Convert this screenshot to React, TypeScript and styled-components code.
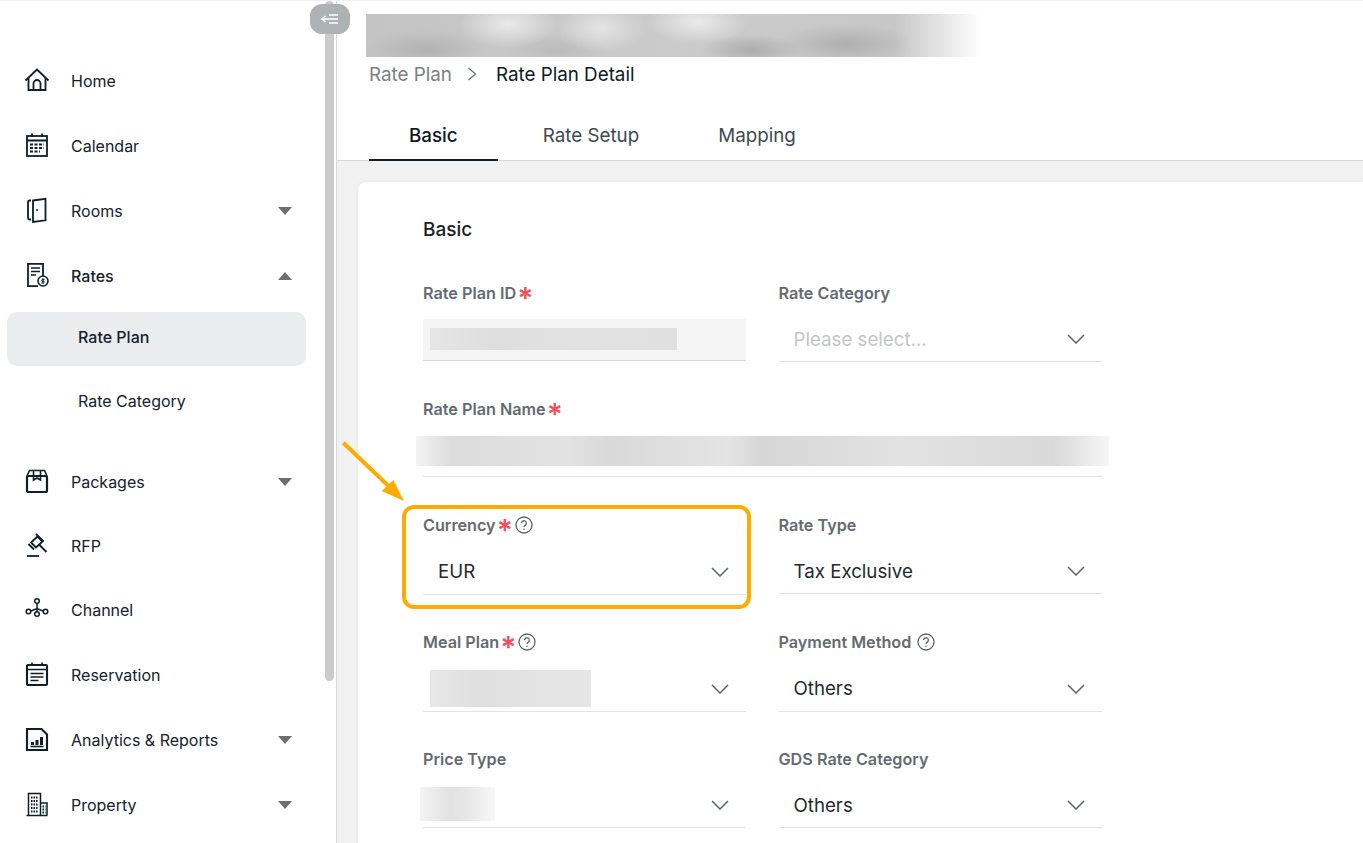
import React from "react";
import styled, { createGlobalStyle } from "styled-components";

const Global = createGlobalStyle`
  html, body { margin: 0; padding: 0; height: 100%; overflow: hidden; background: #fff; }
  * { box-sizing: border-box; }
  body { font-family: Inter, "Liberation Sans", sans-serif; }
`;
const Page = styled.div`display: flex; height: 843px; width: 1363px; overflow: hidden; border-top: 1px solid #f2f2f2;`;
const Sidebar = styled.aside`position: relative; flex: 0 0 337px; border-right: 1px solid #d6d9db; background: #fff; padding: 47px 30px 0 7px;`;
const Scroll = styled.div`position: absolute; left: 325px; top: 0; width: 9px; height: 680px; background: #cbcbcb; border-radius: 5px;`;
const Toggle = styled.button`position: absolute; left: 310px; top: 3px; width: 40px; height: 30px; border: 0; border-radius: 12px; background: #adb2b5; display: flex; align-items: center; justify-content: center; padding: 0; z-index: 3;`;
const Item = styled.div<{ $h?: number }>`display: flex; align-items: center; height: ${p => p.$h ?? 65}px; padding-left: 17px; color: #14222d; font-size: 16px;`;
const IconBox = styled.span`width: 47px; display: flex; flex: none; color: #0d1f2b; margin-top: -2px;`;
const ItemLabel = styled.span<{ $strong?: boolean }>`flex: 1; font-weight: ${p => p.$strong ? 500 : 400};`;
const Caret = styled.span<{ $up?: boolean }>`width: 0; height: 0; margin-right: 14px; border-left: 7px solid transparent; border-right: 7px solid transparent; ${p => p.$up ? "border-bottom: 8px solid #677077;" : "border-top: 8px solid #677077;"}`;
const Sub = styled.div<{ $active?: boolean }>`display: flex; align-items: center; height: 54px; width: 299px; padding: 0 0 4px 71px; border-radius: 10px; font-size: 16px; color: #14222d; font-weight: ${p => p.$active ? 500 : 400}; background: ${p => p.$active ? "#ebeced" : "transparent"};`;
const SubGroup = styled.div`display: flex; flex-direction: column; gap: 10px; margin: 4px 0 20px;`;

const Main = styled.main`flex: 1; min-width: 0; background: #f2f2f2; display: flex; flex-direction: column;`;
const Head = styled.header`background: #fff; height: 160px; border-bottom: 1px solid #d6d9db; padding: 13px 0 0 29px; flex: none;`;
const TitleBlur = styled.div`
  width: 615px; height: 43px;
  background:
    linear-gradient(90deg, rgba(255,255,255,0) 86%, #fff 100%),
    radial-gradient(ellipse 50px 24px at 142px 10px, rgba(240,240,240,.85), rgba(240,240,240,0)),
    radial-gradient(ellipse 45px 24px at 235px 14px, rgba(235,235,235,.8), rgba(235,235,235,0)),
    radial-gradient(ellipse 50px 22px at 332px 8px, rgba(240,240,240,.85), rgba(240,240,240,0)),
    radial-gradient(ellipse 60px 20px at 60px 36px, rgba(165,165,165,.6), rgba(165,165,165,0)),
    radial-gradient(ellipse 50px 18px at 190px 36px, rgba(175,175,175,.5), rgba(175,175,175,0)),
    radial-gradient(ellipse 50px 16px at 385px 36px, rgba(160,160,160,.7), rgba(160,160,160,0)),
    radial-gradient(ellipse 70px 20px at 480px 30px, rgba(165,165,165,.7), rgba(165,165,165,0)),
    linear-gradient(90deg, #c4c4c4, #cbcbcb 50%, #c6c6c6);
`;
const Crumbs = styled.div`display: flex; align-items: center; height: 34px; padding-left: 3px; font-size: 18.8px; color: #7a8085;`;
const CrumbCurrent = styled.span`color: #0d1a24; margin-left: 19px;`;
const CrumbSep = styled.svg`margin-left: 15px; color: #6c7378;`;
const Tabs = styled.div`display: flex; margin-top: 25px; padding-left: 3px;`;
const Tab = styled.div<{ $active?: boolean }>`
  height: 45px; padding: 0 40px; font-size: 18.8px; line-height: 40px; margin-right: ${p => p.$active ? "5px" : "-1px"};
  color: ${p => p.$active ? "#0d1a24" : "#3f4a52"}; font-weight: ${p => p.$active ? 500 : 400};
  border-bottom: ${p => p.$active ? "2px solid #0d1f2b" : "0"};
`;
const Body = styled.div`flex: 1; padding: 21px 0 0 21px; overflow: hidden;`;
const Card = styled.section`background: #fff; border-radius: 8px 0 0 0; height: 800px; padding: 37px 0 0 65px; box-shadow: 0 0 4px rgba(0,0,0,.05);`;
const CardTitle = styled.h2`margin: 0 0 42px; font-size: 19px; line-height: 22px; font-weight: 500; color: #1a1f24;`;
const Grid = styled.div`display: grid; grid-template-columns: 323px 323px; column-gap: 32.5px; width: 678.500px;`;
const Field = styled.div<{ $wide?: boolean; $h: number }>`position: relative; grid-column: ${p => p.$wide ? "1 / span 2" : "auto"}; height: ${p => p.$h}px;`;
const Label = styled.div`display: flex; align-items: center; height: 20px; font-size: 16.2px; font-weight: 600; color: #646b70;`;
const Star = styled.span`color: #f2505d; font-size: 30px; margin-left: 1px; margin-right: -4px; line-height: 20px; height: 20px; padding-top: 5px; font-weight: 600;`;
const Help = styled.svg`margin-left: 6px; color: #5d6469;`;
const Control = styled.div<{ $filled?: boolean; $h?: number }>`
  display: flex; align-items: center; justify-content: space-between; height: ${p => p.$h ?? 43}px; margin-top: 16px;
  border-bottom: 1px solid ${p => p.$filled ? "#d8d8d8" : "#e1e3e4"}; padding: 0 17px 2px 15px; font-size: 18.7px; color: #222a30;
  background: ${p => p.$filled ? "#f5f5f5" : "transparent"};
`;
const Placeholder = styled.span`color: #c3c6c8;`;
const BlurBar = styled.div<{ $w: number; $h: number; $ml: number; $mb?: number; $tone: string }>`
  width: ${p => p.$w}px; height: ${p => p.$h}px; margin-left: ${p => p.$ml}px; margin-bottom: ${p => p.$mb ?? 0}px; flex: none;
  background: ${p => p.$tone};
`;
const Highlight = styled.div`position: absolute; left: -21px; top: -10px; width: 349px; height: 104px; border: 4px solid #ffab00; border-radius: 12px; pointer-events: none;`;
const Arrow = styled.svg`position: absolute; left: -82px; top: -85px; pointer-events: none;`;

const S = { width: 26, height: 26, viewBox: "0 0 26 26", fill: "none", stroke: "currentColor", strokeWidth: 1.8 } as const;
const Icons: Record<string, React.ReactNode> = {
  home: <svg {...S}><path d="M1.500 13.500 13 2.500l11.500 11" /><path d="M4.500 11v12h17V11" /><path d="M9.500 23v-6.500a3.500 3.500 0 0 1 7 0V23" /></svg>,
  cal: <svg {...S}><rect x="3" y="4" width="20" height="20" /><path d="M3 8.500h20M8 1.500V5M18 1.500V5" /><path d="M6 12.500h14M6 16h14M6 19.500h10" strokeDasharray="3 1.500" strokeWidth="2" /></svg>,
  door: <svg {...S}><path d="M7 3.500H5.500a1.500 1.500 0 0 0-1.500 1.500v16a1.500 1.500 0 0 0 1.500 1.500H7" /><path d="M9 3.500 21.500 1.800v21.500L9 25z" /><circle cx="13" cy="13" r="1" fill="currentColor" stroke="none" /></svg>,
  rates: <svg {...S}><path d="M19 14V1.800H4v22.400h10" /><path d="M7 6h9M7 9.500h9M7 13h5" strokeWidth="1.600" /><circle cx="19" cy="19" r="5" strokeWidth="1.600" /><path d="M19 16.200v5.600M20.600 17.300h-2.300a1 1 0 0 0 0 1.800h1.400a1 1 0 0 1 0 1.800h-2.300" strokeWidth="1" /></svg>,
  pack: <svg {...S}><rect x="3" y="8" width="20" height="16" rx="1.500" strokeWidth="2.200" /><path d="M3 8 5.500 2.500h15L23 8M9.500 2.500V12l3.500-2 3.500 2V2.500" strokeWidth="1.600" /></svg>,
  rfp: <svg {...S}><path d="M13.500 4.500 7 10.500l5 5 6.500-6z" /><path d="M4.500 12 10 17.500M12 2l7.500 7.500M15 12.500l7.500 7.500" /><path d="M3 24h12" /></svg>,
  chan: <svg {...S} strokeWidth={1.500}><circle cx="13" cy="5" r="2.300" /><circle cx="4.500" cy="15.500" r="2.300" /><circle cx="13" cy="18" r="2.300" /><circle cx="21.500" cy="15.500" r="2.300" /><path d="M13 7.500v8M7 15l6-2.500 6 2.500" /></svg>,
  res: <svg {...S}><rect x="3" y="4" width="20" height="20" rx="1" strokeWidth="2.100" /><path d="M3 8.500h20M8 1.500V5M18 1.500V5M6.500 12.500h13M6.500 16h13M6.500 19.500h8" strokeWidth="1.700" /></svg>,
  ana: <svg {...S}><path d="M3 3h14.500L23 8.500V24H3z" strokeWidth="2.100" /><path d="M6.500 20.500h13" strokeWidth="1.600" /><path d="M8.500 19v-3M13 19v-5M17.500 19v-8" strokeWidth="3" /></svg>,
  prop: <svg {...S} strokeWidth={1.500}><path d="M4.500 24V2.500h12V24M16.500 12h6.500v12M2.500 24.500h21" /><path d="M7 6.500h7M7 10h7M7 13.500h7M7 17h7M7 20.500h7M18.500 15.500h3M18.500 18.500h3M18.500 21.500h3" strokeDasharray="1.500 1" strokeWidth="2" /></svg>,
};

const Nav = ({ icon, label, caret, strong, h }: { icon: string; label: string; caret?: "up" | "down"; strong?: boolean; h?: number }) => (
  <Item $h={h}>
    <IconBox>{Icons[icon]}</IconBox>
    <ItemLabel $strong={strong}>{label}</ItemLabel>
    {caret && <Caret $up={caret === "up"} />}
  </Item>
);

const Chevron = () => (
  <svg width="18" height="10" viewBox="0 0 18 10" fill="none" stroke="#59636a" strokeWidth="1.500"><path d="M1 1l8 8 8-8" /></svg>
);
const HelpIcon = () => (
  <Help width="18" height="18" viewBox="0 0 18 18" fill="none" stroke="currentColor" strokeWidth="1.300">
    <circle cx="9" cy="9" r="8" />
    <path d="M6.600 7.100a2.400 2.400 0 1 1 3.800 2c-.9.500-1.400 1-1.400 2" />
    <circle cx="9" cy="13.300" r=".8" fill="currentColor" stroke="none" />
  </Help>
);

export default function App() {
  return (
    <>
      <Global />
      <Page>
        <Sidebar>
          <Scroll />
          <Toggle aria-label="collapse">
            <svg width="18" height="10" viewBox="0 0 18 10" fill="none" stroke="#fff" strokeWidth="1.500">
              <path d="M1 5h16M4.500 2 1 5l3.500 3M8 1h9M8 9h9" />
            </svg>
          </Toggle>
          <Nav icon="home" label="Home" />
          <Nav icon="cal" label="Calendar" />
          <Nav icon="door" label="Rooms" caret="down" />
          <Nav icon="rates" label="Rates" caret="up" strong />
          <SubGroup>
            <Sub $active>Rate Plan</Sub>
            <Sub>Rate Category</Sub>
          </SubGroup>
          <Nav icon="pack" label="Packages" caret="down" h={64} />
          <Nav icon="rfp" label="RFP" h={64} />
          <Nav icon="chan" label="Channel" h={64} />
          <Nav icon="res" label="Reservation" />
          <Nav icon="ana" label="Analytics &amp; Reports" caret="down" />
          <Nav icon="prop" label="Property" caret="down" />
        </Sidebar>
        <Main>
          <Head>
            <TitleBlur />
            <Crumbs>
              Rate Plan
              <CrumbSep width="10" height="14" viewBox="0 0 10 14" fill="none" stroke="currentColor" strokeWidth="1.300"><path d="M1.500 1l7 6-7 6" /></CrumbSep>
              <CrumbCurrent>Rate Plan Detail</CrumbCurrent>
            </Crumbs>
            <Tabs>
              <Tab $active>Basic</Tab>
              <Tab>Rate Setup</Tab>
              <Tab>Mapping</Tab>
            </Tabs>
          </Head>
          <Body>
            <Card>
              <CardTitle>Basic</CardTitle>
              <Grid>
                <Field $h={116}>
                  <Label>Rate Plan ID<Star>*</Star></Label>
                  <Control $filled $h={42}><BlurBar $w={247} $h={22} $ml={-8} $tone="linear-gradient(90deg,#e6e6e6,#dedede 25%,#e2e2e2 60%,#e0e0e0)" /></Control>
                </Field>
                <Field $h={116}>
                  <Label>Rate Category</Label>
                  <Control $h={43}><Placeholder>Please select...</Placeholder><Chevron /></Control>
                </Field>
                <Field $wide $h={116}>
                  <Label>Rate Plan Name<Star>*</Star></Label>
                  <Control $h={42}><BlurBar $w={693} $h={30} $ml={-22} $mb={7} $tone="linear-gradient(90deg,#f4f4f4,#dcdcdc 5%,#e2e2e2 22%,#d9d9d9 28%,#e4e4e4 45%,#d6d6d6 50%,#e2e2e2 70%,#d9d9d9 92%,#f6f6f6)" /></Control>
                </Field>
                <Field $h={117}>
                  <Label>Currency<Star>*</Star><HelpIcon /></Label>
                  <Control $h={44}>EUR<Chevron /></Control>
                  <Highlight />
                  <Arrow width="66" height="74" viewBox="0 0 66 74" fill="none" stroke="#ffab00" strokeWidth="4">
                    <path d="M2.300 12.700 58 66" />
                    <path d="M40.700 61 63 71 52.300 50z" fill="#ffab00" stroke="none" />
                  </Arrow>
                </Field>
                <Field $h={117}>
                  <Label>Rate Type</Label>
                  <Control $h={43}>Tax Exclusive<Chevron /></Control>
                </Field>
                <Field $h={117}>
                  <Label>Meal Plan<Star>*</Star><HelpIcon /></Label>
                  <Control $h={44}><BlurBar $w={161} $h={37} $ml={-8} $tone="linear-gradient(90deg,#e8e8e8,#dfdfdf 30%,#e4e4e4 70%,#e6e6e6)" /><Chevron /></Control>
                </Field>
                <Field $h={117}>
                  <Label>Payment Method<HelpIcon /></Label>
                  <Control $h={44}>Others<Chevron /></Control>
                </Field>
                <Field $h={94}>
                  <Label>Price Type</Label>
                  <Control $h={43}><BlurBar $w={75} $h={34} $ml={-18} $mb={3} $tone="linear-gradient(90deg,#f4f4f4,#e2e2e2 40%,#e6e6e6 60%,#f8f8f8)" /><Chevron /></Control>
                </Field>
                <Field $h={94}>
                  <Label>GDS Rate Category</Label>
                  <Control $h={43}>Others<Chevron /></Control>
                </Field>
              </Grid>
            </Card>
          </Body>
        </Main>
      </Page>
    </>
  );
}
